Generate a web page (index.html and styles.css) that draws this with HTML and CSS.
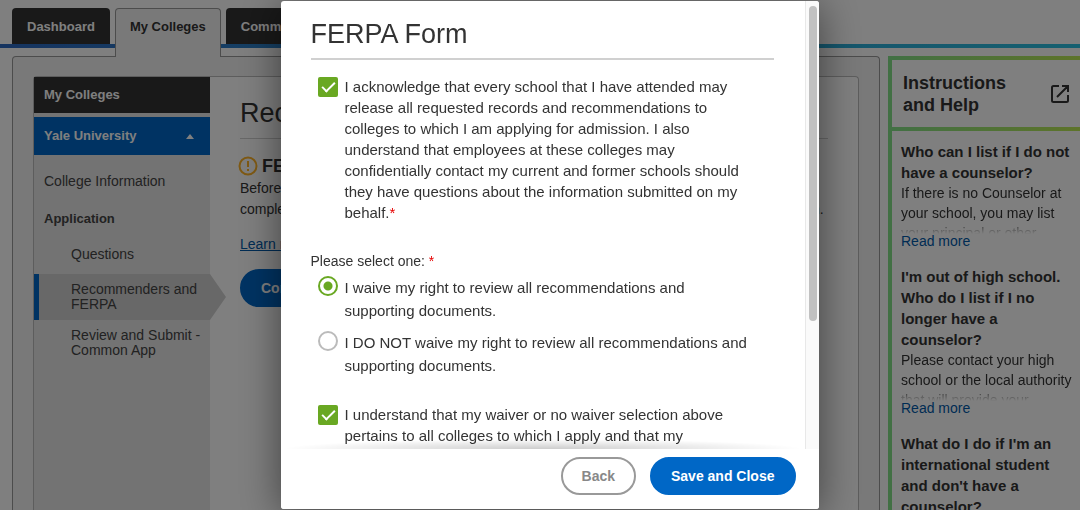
FILE: index.html
```html
<!DOCTYPE html>
<html lang="en">
<head>
  <meta charset="UTF-8" />
  <meta name="viewport" content="width=device-width, initial-scale=1.0" />
  <title>Recommenders and FERPA</title>
  <link rel="stylesheet" href="styles.css">
</head>
<body>
  <div class="app">
    <nav class="tabs">
      <a class="tab" href="#">Dashboard</a>
      <a class="tab active" href="#">My Colleges</a>
      <a class="tab" href="#">Common App</a>
    </nav>

    <div class="columns">
      <main class="panel">
        <div class="panel-inner">
          <aside class="sidebar">
            <div class="side-title">My Colleges</div>
            <button class="side-college" type="button">Yale University <span class="caret"></span></button>
            <a class="side-link" href="#">College Information</a>
            <div class="side-heading">Application</div>
            <a class="side-sub" href="#">Questions</a>
            <a class="side-sub selected" href="#">Recommenders and FERPA</a>
            <a class="side-sub" href="#">Review and Submit - Common App</a>
          </aside>

          <section class="content">
            <h1>Recommenders and FERPA</h1>
            <h2>
              <svg width="20" height="20" viewBox="0 0 20 20" aria-hidden="true">
                <circle cx="10" cy="10" r="8.5" fill="none" stroke="#ffb428" stroke-width="2"/>
                <path d="M10 5v6M10 13v2" stroke="#ffb428" stroke-width="2"/>
              </svg>
              FERPA Release Authorization
            </h2>
            <p>Before you can invite or assign your recommenders, you will need to<br/>complete the release authorization that is shown on the form below for this college application.</p>
            <a class="learn" href="#">Learn more about FERPA</a>
            <button class="btn primary" type="button">Complete Release Authorization</button>
          </section>
        </div>
      </main>

      <aside class="help">
        <header>
          <h2>Instructions and Help</h2>
          <a href="#" aria-label="Open in new window">
            <svg width="18" height="18" viewBox="0 0 18 18" fill="none" stroke="#333" stroke-width="2">
              <path d="M8 1H2.500Q1 1 1 2.500V15.500Q1 17 2.500 17H15.500Q17 17 17 15.500V10M11 1H17V7M17 1L6 12"/>
            </svg>
          </a>
        </header>
        <div class="faq">
          <h3>Who can I list if I do not have a counselor?</h3>
          <p>If there is no Counselor at your school, you may list your principal or other</p>
          <a href="#">Read more</a>
          <h3>I'm out of high school. Who do I list if I no longer have a counselor?</h3>
          <p>Please contact your high school or the local authority that will provide your</p>
          <a href="#">Read more</a>
          <h3>What do I do if I'm an international student and don't have a counselor?</h3>
        </div>
      </aside>
    </div>
  </div>

  <div class="overlay">
    <form class="modal" role="dialog" aria-labelledby="modalTitle">
      <div class="modal-scroll">
        <div class="modal-body">
          <h1 id="modalTitle">FERPA Form</h1>
          <div class="choice first">
            <input type="checkbox" id="acknowledge" checked>
            <label for="acknowledge">I acknowledge that every school that I have attended may release all requested records and recommendations to colleges to which I am applying for admission. I also understand that employees at these colleges may confidentially contact my current and former schools should they have questions about the information submitted on my behalf.<span class="req">*</span></label>
          </div>
          <fieldset>
            <legend>Please select one: <span class="req">*</span></legend>
            <div class="choice">
              <input type="radio" name="waiver" id="waive" checked>
              <label for="waive">I waive my right to review all recommendations and supporting documents.</label>
            </div>
            <div class="choice">
              <input type="radio" name="waiver" id="noWaive">
              <label for="noWaive">I DO NOT waive my right to review all recommendations and supporting documents.</label>
            </div>
          </fieldset>
          <div class="choice">
            <input type="checkbox" id="understand" checked>
            <label for="understand">I understand that my waiver or no waiver selection above pertains to all colleges to which I apply and that my</label>
          </div>
        </div>
        <div class="scrollbar"><div class="thumb"></div></div>
      </div>
      <footer>
        <button class="btn" type="button">Back</button>
        <button class="btn primary" type="submit">Save and Close</button>
      </footer>
    </form>
  </div>
</body>
</html>
```

FILE: styles.css
```css
* {
  box-sizing: border-box;
}
body {
  margin: 0;
  font-family: "Liberation Sans", Arial, sans-serif;
  font-size: 14px;
  color: #333;
  background: #fff;
}
h1, h2, h3, p {
  margin: 0;
}
a {
  color: #0059a8;
  text-decoration: none;
}
button {
  font-family: inherit;
}

/* page */
.app {
  display: flex;
  flex-direction: column;
  height: 100vh;
  overflow: hidden;
}
.tabs {
  display: flex;
  gap: 5px;
  height: 48px;
  flex: none;
  padding: 8px 12px 0;
  border-bottom: 4px solid;
  border-image: linear-gradient(to right, #2c68c0, #2b8ccc 40%, #2cc0e0) 1;
}
.tab {
  height: 36px;
  padding: 0 15px;
  line-height: 38px;
  font-size: 13px;
  font-weight: bold;
  color: #fff;
  background: #333;
  border-radius: 4px 4px 0 0;
}
.tab.active {
  position: relative;
  z-index: 1;
  height: 49px;
  padding: 0 14px;
  line-height: 36px;
  color: #333;
  background: #f2f2f2;
  border: 1px solid #999;
  border-bottom: 0;
}
.columns {
  display: flex;
  flex: 1;
  gap: 8px;
  min-height: 0;
  padding: 8px 0 0 12px;
}
.panel {
  flex: 1;
  padding: 19px 20px 0;
  background: #f2f2f2;
  border: 1px solid #999;
  border-bottom: 0;
  border-radius: 4px 4px 0 0;
}
.panel-inner {
  display: flex;
  height: 100%;
  background: #fff;
  border: 1px solid #bbb;
  border-width: 1px 1px 0;
  border-radius: 4px 4px 0 0;
}
.sidebar {
  width: 176px;
  flex: none;
  background: #e6e6e6;
}
.side-title, .side-college {
  height: 36px;
  padding: 0 10px;
  font-size: 13px;
  line-height: 36px;
  font-weight: bold;
  color: #fff;
  background: #333;
}
.side-college {
  display: flex;
  align-items: center;
  justify-content: space-between;
  width: 100%;
  height: 38px;
  margin-top: 4px;
  padding-right: 16px;
  border: 0;
  background: #0067c6;
}
.caret {
  border: 4px solid transparent;
  border-top: 0;
  border-bottom: 5px solid #fff;
}
.side-link, .side-heading, .side-sub {
  display: block;
  color: #444;
  line-height: 15px;
}
.side-link {
  padding: 19px 10px 11px;
}
.side-heading {
  padding: 11px 10px;
  font-size: 13px;
  font-weight: bold;
}
.side-sub {
  padding: 8px 8px 8px 37px;
}
.side-heading + .side-sub {
  padding-top: 10px;
  padding-bottom: 12px;
}
.side-sub.selected {
  position: relative;
  padding-left: 32px;
  background: #d0d0d0;
  border-left: 5px solid #0067c6;
}
.side-sub.selected::after {
  content: "";
  position: absolute;
  left: 100%;
  top: 0;
  width: 16px;
  height: 100%;
  background: #d0d0d0;
  clip-path: polygon(0 0, 100% 50%, 0 100%);
}
.content {
  flex: 1;
  min-width: 0;
  padding: 18px 30px 0;
  white-space: nowrap;
}
.content h1 {
  height: 44px;
  font-size: 27px;
  line-height: 36px;
  font-weight: normal;
  border-bottom: 1px solid #d0d0d0;
}
.content h2 {
  display: flex;
  align-items: center;
  gap: 4px;
  margin: 17px 0 2px -2px;
  font-size: 18px;
  line-height: 20px;
}
.content p {
  line-height: 21px;
}
.learn {
  display: block;
  margin: 14px 0 15px;
  line-height: 20px;
  text-decoration: underline;
}

/* help column */
.help {
  width: 192px;
  flex: none;
  border-left: 4px solid #84e088;
}
.help header {
  display: flex;
  align-items: center;
  justify-content: space-between;
  height: 75px;
  padding: 0 11px;
  border: 4px solid;
  border-width: 4px 0;
  border-image: linear-gradient(to right, #84e088, #bce854) 1;
}
.help header h2 {
  width: 110px;
  font-size: 18px;
  line-height: 22px;
}
.help header svg {
  display: block;
}
.faq {
  padding: 10px 4px 0 9px;
}
.faq h3 {
  font-size: 15px;
  line-height: 21px;
}
.faq p {
  height: 51px;
  overflow: hidden;
  line-height: 20px;
  -webkit-mask-image: linear-gradient(#000 75%, transparent);
  mask-image: linear-gradient(#000 75%, transparent);
}
.faq a {
  display: block;
  margin-bottom: 18px;
  line-height: 14px;
}

/* modal */
.overlay {
  position: fixed;
  inset: 0;
  z-index: 10;
  display: flex;
  justify-content: center;
  padding: 1px 0 1px 19px;
  background: rgba(0, 0, 0, 0.5);
}
.modal {
  display: flex;
  flex-direction: column;
  width: 100%;
  max-width: 538px;
  overflow: hidden;
  background: #fff;
  border-radius: 3px;
  box-shadow: 0 5px 40px rgba(0, 0, 0, 0.5);
}
.modal-scroll {
  display: flex;
  flex: 1;
  min-height: 0;
}
.modal-body {
  flex: 1;
  overflow: hidden;
  padding: 15px 31px 0 30px;
}
.modal-body h1 {
  height: 44px;
  font-size: 27px;
  line-height: 36px;
  font-weight: normal;
  border-bottom: 2px solid #d0d0d0;
}
.choice {
  display: flex;
  gap: 7px;
  padding: 0 16px 0 7px;
  font-size: 15px;
  line-height: 21px;
}
.choice.first {
  margin-top: 16px;
}
.choice input {
  appearance: none;
  flex: none;
  width: 20px;
  height: 20px;
  margin: 1px 0 0;
}
.choice input[type="checkbox"] {
  border-radius: 2px;
  background: #69a822;
}
.choice input[type="checkbox"]::before {
  content: "";
  display: block;
  width: 11px;
  height: 5px;
  margin: 5px 4px;
  border: solid #fff;
  border-width: 0 0 2px 2px;
  transform: rotate(-45deg);
}
.choice input[type="radio"] {
  margin-top: 0;
  border: 2px solid #bbb;
  border-radius: 50%;
}
.choice input[type="radio"]:checked {
  border-color: #69a822;
  background: radial-gradient(#69a822 4px, #fff 5px);
}
fieldset {
  margin: 28px 0 27px;
  padding: 0;
  border: 0;
}
legend {
  padding: 0;
  line-height: 21px;
}
fieldset .choice {
  margin-top: 4px;
  line-height: 23px;
}
fieldset .choice + .choice {
  margin-top: 9px;
}
.req {
  color: #e60000;
}
.scrollbar {
  width: 14px;
  padding: 5px 2px 0 3px;
  background: #fafafa;
  border-left: 1px solid #e8e8e8;
}
.thumb {
  width: 8px;
  height: 71%;
  border-radius: 4px;
  background: #c1c1c1;
}
.modal footer {
  position: relative;
  display: flex;
  justify-content: flex-end;
  gap: 14px;
  padding: 8px 23px 14px;
  background: #fff;
}
.modal footer::before {
  content: "";
  position: absolute;
  left: 0;
  right: 14px;
  bottom: 100%;
  height: 10px;
  background: radial-gradient(ellipse at bottom, rgba(0, 0, 0, 0.2), transparent 70%);
}
.btn {
  height: 38px;
  padding: 0 19px;
  font-size: 14px;
  font-weight: bold;
  color: #888;
  background: #fff;
  border: 2px solid #999;
  border-radius: 19px;
}
.btn.primary {
  color: #fff;
  background: #0067c6;
  border-color: #0067c6;
}
```
